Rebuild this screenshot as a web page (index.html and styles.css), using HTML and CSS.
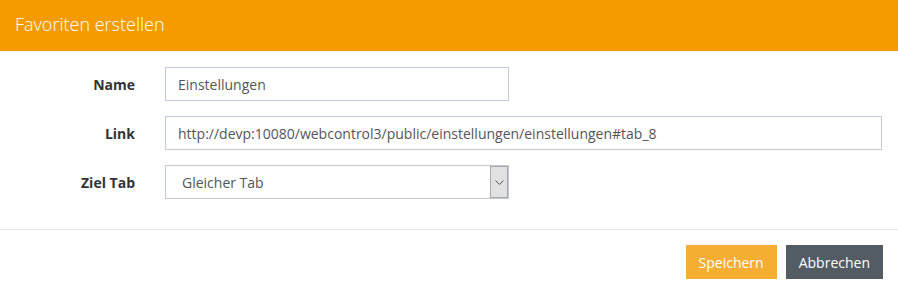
FILE: index.html
```html
<!DOCTYPE html>
<html lang="de">
<head>
    <meta charset="UTF-8">
    <title>Favoriten erstellen</title>
    <link rel="stylesheet" href="styles.css">
</head>
<body>
    <div class="modal">
        <div class="modal-header">
            <h4>Favoriten erstellen</h4>
        </div>
        <form class="modal-body">
            <div class="form-row">
                <label for="name">Name</label>
                <input type="text" id="name" class="short" value="Einstellungen">
            </div>
            <div class="form-row">
                <label for="link">Link</label>
                <input type="text" id="link" value="http://devp:10080/webcontrol3/public/einstellungen/einstellungen#tab_8">
            </div>
            <div class="form-row">
                <label for="ziel">Ziel Tab</label>
                <div class="select-box short">
                    <select id="ziel">
                        <option>Gleicher Tab</option>
                        <option>Neuer Tab</option>
                    </select>
                    <span class="arrow">
                        <svg width="9" height="5" viewBox="0 0 9 5"><path d="M0.5 0.5 L4.5 4.5 L8.5 0.5" fill="none" stroke="#555" stroke-width="1"/></svg>
                    </span>
                </div>
            </div>
        </form>
        <div class="modal-footer">
            <button class="btn btn-save">Speichern</button>
            <button class="btn btn-cancel">Abbrechen</button>
        </div>
    </div>
</body>
</html>
```

FILE: styles.css
```css
body {
    margin: 0;
    font-family: 'Open Sans', sans-serif;
    font-size: 14px;
    color: #333;
    background: #fff;
}

.modal-header {
    background-color: #F59B00;
    height: 51px;
    padding: 0 15px;
    display: flex;
    align-items: center;
    box-sizing: border-box;
}

.modal-header h4 {
    margin: 0;
    color: #fff;
    font-size: 18px;
    font-weight: 300;
    padding-bottom: 3px;
}

.modal-body {
    padding: 16px 16px 30px 0;
    display: flex;
    flex-direction: column;
    gap: 15px;
}

.form-row {
    display: grid;
    grid-template-columns: 135px 1fr;
    column-gap: 30px;
    align-items: center;
}

.form-row label {
    text-align: right;
    font-weight: bold;
    color: #333;
}

input[type="text"] {
    height: 34px;
    box-sizing: border-box;
    border: 1px solid #c2cad8;
    padding: 0 12px;
    font-family: inherit;
    font-size: 14px;
    color: #555;
    outline: none;
}

.short {
    width: 344px;
}

.select-box {
    display: flex;
    height: 34px;
    box-sizing: border-box;
    border: 1px solid #c2cad8;
}

.select-box select {
    flex: 1;
    appearance: none;
    border: none;
    background: #fff;
    padding: 0 16px;
    font-family: inherit;
    font-size: 14px;
    color: #555;
    outline: none;
}

.arrow {
    width: 16px;
    background: #e1e1e1;
    border: 1px solid #a9a9a9;
    display: flex;
    align-items: center;
    justify-content: center;
}

.modal-footer {
    border-top: 1px solid #e5e5e5;
    padding: 15px 15px 15px;
    display: flex;
    justify-content: flex-end;
    gap: 9px;
}

.btn {
    height: 34px;
    border: none;
    padding: 0 13px;
    font-family: inherit;
    font-size: 14px;
    color: #fff;
    cursor: pointer;
}

.btn-save {
    background-color: #F5AE32;
}

.btn-cancel {
    background-color: #525C62;
}
```
